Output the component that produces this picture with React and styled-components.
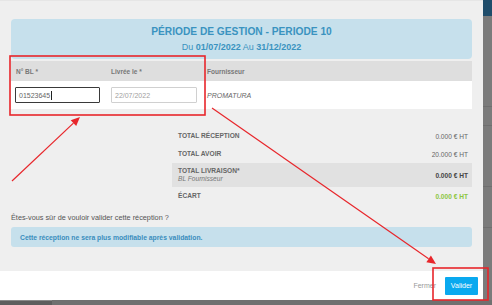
import React from 'react';
import styled, { createGlobalStyle } from 'styled-components';

const GlobalStyle = createGlobalStyle`
  html, body {
    margin: 0;
    padding: 0;
    width: 492px;
    height: 305px;
    overflow: hidden;
    background: #6e6e6e;
  }
  body {
    font-family: 'Liberation Sans', Arial, sans-serif;
  }
`;

const Screen = styled.div`
  position: relative;
  width: 492px;
  height: 305px;
  display: flex;
  flex-direction: column;
`;

const Stage = styled.div`
  display: flex;
  height: 300px;
`;

const Modal = styled.div`
  width: 483px;
  display: flex;
  flex-direction: column;
  background: #fff;
`;

const ModalBody = styled.div`
  height: 271px;
  box-sizing: border-box;
  background: #efefef;
  padding: 18px 11px 0;
  border-top: 1px solid #e6e6e6;
`;

const Backdrop = styled.div`
  flex: 1;
  display: flex;
  flex-direction: column;
  background: #7b7b7b;
`;

const BackdropTopbar = styled.div`
  height: 16px;
  background: #1f4d6b;
`;

const BackdropLine = styled.div`
  margin-top: ${(p) => p.$top}px;
  height: 1px;
  background: #6f6f6f;
`;

const BottomStrip = styled.div`
  height: 5px;
  display: flex;
  background: #707070;
`;

const StripTab = styled.div`
  width: 52px;
  background: #5e5e5e;
  border-top: 1px solid #8a8a8a;
`;

const PeriodBox = styled.div`
  height: 40px;
  box-sizing: border-box;
  background: #c6e0ec;
  border-radius: 4px;
  display: flex;
  flex-direction: column;
  align-items: center;
  justify-content: center;
  gap: 5px;
  color: #3a93c0;
`;

const PeriodTitle = styled.div`
  font-size: 10.2px;
  font-weight: bold;
`;

const PeriodDates = styled.div`
  font-size: 9px;
  b {
    font-weight: bold;
  }
`;

const Grid = styled.div`
  margin-top: 2px;
  display: grid;
  grid-template-columns: 95px 96px 1fr;
`;

const HeadCell = styled.div`
  height: 20px;
  background: #dedede;
  display: flex;
  align-items: center;
  padding-left: 5px;
  font-size: 6.5px;
  font-weight: bold;
  color: #777;
`;

const BodyCell = styled.div`
  height: 28px;
  background: #fff;
  display: flex;
  align-items: center;
  padding-left: ${(p) => p.$pad || 4}px;
  font-size: 7px;
  color: #666;
  font-style: ${(p) => (p.$italic ? 'italic' : 'normal')};
`;

const Field = styled.div`
  width: ${(p) => p.$w}px;
  height: 16px;
  box-sizing: border-box;
  border: ${(p) => (p.$focus ? '1.5px solid #3a3a3a' : '1px solid #d0d0d0')};
  border-radius: 1px;
  display: flex;
  align-items: center;
  padding-left: 3px;
  font-size: 7px;
  color: ${(p) => (p.$focus ? '#666' : '#a0a0a0')};
`;

const Caret = styled.span`
  display: inline-block;
  width: 1px;
  height: 9px;
  background: #222;
  margin-left: 1px;
`;

const Totals = styled.div`
  margin: 18px 0 0 161px;
  display: flex;
  flex-direction: column;
`;

const TotalRow = styled.div`
  height: ${(p) => p.$h || 18}px;
  display: flex;
  align-items: center;
  justify-content: space-between;
  padding: 0 4px 0 6px;
  background: ${(p) => (p.$shade ? '#e1e1e1' : 'transparent')};
`;

const TotalLabel = styled.div`
  display: flex;
  flex-direction: column;
  font-size: 6.6px;
  font-weight: bold;
  color: #666;
  line-height: 8px;
`;

const TotalNote = styled.span`
  font-weight: normal;
  font-style: italic;
  color: #777;
`;

const TotalValue = styled.div`
  font-size: 6.6px;
  font-weight: ${(p) => (p.$bold || p.$ok ? 'bold' : 'normal')};
  color: ${(p) => (p.$ok ? '#8cc63f' : p.$bold ? '#444' : '#666')};
`;

const Question = styled.div`
  margin-top: 8px;
  font-size: 7.3px;
  color: #555;
`;

const Notice = styled.div`
  margin-top: 5px;
  height: 20px;
  box-sizing: border-box;
  background: #c6e0ec;
  border-radius: 3px;
  display: flex;
  align-items: center;
  padding-left: 9px;
  font-size: 6.8px;
  font-weight: bold;
  color: #3a8dbd;
`;

const Footer = styled.div`
  height: 29px;
  display: flex;
  align-items: center;
  justify-content: flex-end;
  gap: 9px;
  padding-right: 5px;
`;

const CloseLink = styled.span`
  font-size: 7px;
  color: #999;
`;

const PrimaryButton = styled.button`
  width: 33px;
  height: 18px;
  border: none;
  border-radius: 1px;
  background: #0aa9ef;
  color: #fff;
  font-family: 'Liberation Sans', Arial, sans-serif;
  font-size: 7px;
  padding: 0;
`;

const Annotations = styled.svg`
  position: absolute;
  left: 0;
  top: 0;
  pointer-events: none;
`;

const Arrow = ({ x1, y1, x2, y2 }) => {
  const a = Math.atan2(y2 - y1, x2 - x1);
  const len = 9;
  const w = 4;
  const bx = x2 - len * Math.cos(a);
  const by = y2 - len * Math.sin(a);
  const px = -Math.sin(a) * w;
  const py = Math.cos(a) * w;
  return (
    <g>
      <line x1={x1} y1={y1} x2={bx} y2={by} stroke="#e8262b" strokeWidth="1.2" />
      <polygon
        points={`${x2},${y2} ${bx + px},${by + py} ${bx - px},${by - py}`}
        fill="#e8262b"
      />
    </g>
  );
};

const totals = [
  { label: 'TOTAL RÉCEPTION', value: '0.000 € HT' },
  { label: 'TOTAL AVOIR', value: '20.000 € HT' },
];

export default function App() {
  return (
    <Screen>
      <GlobalStyle />
      <Stage>
        <Modal>
          <ModalBody>
            <PeriodBox>
              <PeriodTitle>PÉRIODE DE GESTION - PERIODE 10</PeriodTitle>
              <PeriodDates>
                Du <b>01/07/2022</b> Au <b>31/12/2022</b>
              </PeriodDates>
            </PeriodBox>

            <Grid>
              <HeadCell>N° BL *</HeadCell>
              <HeadCell>Livrée le *</HeadCell>
              <HeadCell>Fournisseur</HeadCell>
              <BodyCell>
                <Field $w={85} $focus>
                  01523645
                  <Caret />
                </Field>
              </BodyCell>
              <BodyCell $pad={5}>
                <Field $w={86}>22/07/2022</Field>
              </BodyCell>
              <BodyCell $pad={5} $italic>
                PROMATURA
              </BodyCell>
            </Grid>

            <Totals>
              {totals.map((t) => (
                <TotalRow key={t.label}>
                  <TotalLabel>{t.label}</TotalLabel>
                  <TotalValue>{t.value}</TotalValue>
                </TotalRow>
              ))}
              <TotalRow $shade $h={24}>
                <TotalLabel>
                  TOTAL LIVRAISON*
                  <TotalNote>BL Fournisseur</TotalNote>
                </TotalLabel>
                <TotalValue $bold>0.000 € HT</TotalValue>
              </TotalRow>
              <TotalRow>
                <TotalLabel>ÉCART</TotalLabel>
                <TotalValue $ok>0.000 € HT</TotalValue>
              </TotalRow>
            </Totals>

            <Question>Êtes-vous sûr de vouloir valider cette réception ?</Question>
            <Notice>Cette réception ne sera plus modifiable après validation.</Notice>
          </ModalBody>
          <Footer>
            <CloseLink>Fermer</CloseLink>
            <PrimaryButton>Valider</PrimaryButton>
          </Footer>
        </Modal>
        <Backdrop>
          <BackdropTopbar />
          <BackdropLine $top={90} />
          <BackdropLine $top={18} />
          <BackdropLine $top={60} />
          <BackdropLine $top={40} />
        </Backdrop>
      </Stage>
      <BottomStrip>
        <StripTab />
      </BottomStrip>

      <Annotations width="492" height="305" viewBox="0 0 492 305">
        <rect x="10" y="56" width="195" height="59" fill="none" stroke="#e8262b" strokeWidth="1.6" />
        <rect x="433" y="268" width="55" height="32" fill="none" stroke="#e8262b" strokeWidth="1.6" />
        <Arrow x1={12} y1={181} x2={80} y2={117} />
        <Arrow x1={212} y1={108} x2={436} y2={264} />
      </Annotations>
    </Screen>
  );
}
